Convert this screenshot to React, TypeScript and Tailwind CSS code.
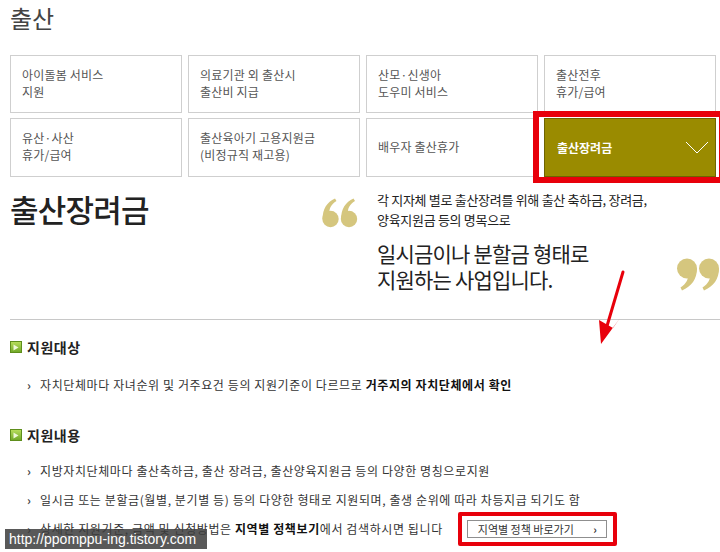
import React from 'react';

const cards: { lines: string[]; active?: boolean }[] = [
  { lines: ['아이돌봄 서비스', '지원'] },
  { lines: ['의료기관 외 출산시', '출산비 지급'] },
  { lines: ['산모·신생아', '도우미 서비스'] },
  { lines: ['출산전후', '휴가/급여'] },
  { lines: ['유산·사산', '휴가/급여'] },
  { lines: ['출산육아기 고용지원금', '(비정규직 재고용)'] },
  { lines: ['배우자 출산휴가'] },
  { lines: ['출산장려금'], active: true },
];

const QuoteOpen = () => (
  <svg width="36" height="30" viewBox="0 0 36 30" className="shrink-0">
    <g fill="#d5c67e">
      <circle cx="8.5" cy="21" r="8.2" />
      <path d="M0.6 21 C0.6 11 5 4 13 0.5 L14.5 3 C9 6.5 7 11 7.5 15 Z" />
      <circle cx="27" cy="21" r="8.2" />
      <path d="M19.1 21 C19.1 11 23.5 4 31.5 0.5 L33 3 C27.5 6.5 25.5 11 26 15 Z" />
    </g>
  </svg>
);

const QuoteClose = () => (
  <svg width="44" height="33" viewBox="0 0 44 33" className="shrink-0">
    <g fill="#d5c67e">
      <circle cx="11" cy="10.5" r="10" />
      <path d="M21 10.5 C21 21 15.5 28.5 6 32.5 L4.5 29.5 C10.5 25.5 12.5 21 12 16 Z" />
      <circle cx="33" cy="10.5" r="10" />
      <path d="M43 10.5 C43 21 37.5 28.5 28 32.5 L26.5 29.5 C32.5 25.5 34.5 21 34 16 Z" />
    </g>
  </svg>
);

const SectionIcon = () => (
  <span className="w-[12px] h-[12px] border border-[#5e8e1c] bg-gradient-to-b from-[#b5dc5a] to-[#72a928] flex items-center justify-center shrink-0">
    <svg width="6" height="7" viewBox="0 0 6 7">
      <path d="M0.5 0.5 L5.5 3.5 L0.5 6.5 Z" fill="#eef8d8" />
    </svg>
  </span>
);

const Bullet = ({ children }: { children: React.ReactNode }) => (
  <div className="flex items-center h-[20px] pl-[27px] text-[12px] text-[#333]">
    <span className="w-[13px] text-[12px] font-bold text-[#444]">›</span>
    <span className="whitespace-nowrap flex items-center tracking-[0.6px]">{children}</span>
  </div>
);

export default function App() {
  return (
    <div className="relative w-[720px] h-[552px] overflow-hidden bg-white font-['Noto_Sans_CJK_KR',sans-serif]">
      {/* Page title */}
      <h1 className="pl-[10px] pt-[3px] text-[24px] leading-[30px] text-[#444] font-normal">출산</h1>

      {/* Category grid */}
      <div className="mt-[22px] ml-[10px] w-[706px] grid grid-cols-4 gap-x-[6px] gap-y-[5px]">
        {cards.map((c, i) =>
          c.active ? (
            <div key={i} className="relative h-[59px]">
              <div className="absolute -left-[11px] -top-[7px] -bottom-[6px] -right-[9px] border-[6px] border-[#e8000b]" />
              <div className="relative h-full bg-[#9a8b00] border border-[#6e6400] flex items-center justify-between pl-[12px] pr-[6px]">
                <span className="text-[12px] font-bold text-white">{c.lines[0]}</span>
                <svg width="24" height="13" viewBox="0 0 24 13">
                  <path d="M1 1 L12 12 L23 1" fill="none" stroke="#fff" strokeWidth="1" />
                </svg>
              </div>
            </div>
          ) : (
            <div key={i} className={`border border-[#cfcfcf] flex items-center px-[11px] ${i < 4 ? 'h-[58px]' : 'h-[59px]'}`}>
              <div className="text-[12px] leading-[17px] text-[#555] pb-[3px] tracking-[0.2px]">
                {c.lines.map((l, j) => (
                  <div key={j}>{l}</div>
                ))}
              </div>
            </div>
          )
        )}
      </div>

      {/* Intro */}
      <div className="mt-[13px] flex items-start">
        <h2 className="w-[322px] shrink-0 pl-[10px] text-[31px] leading-[38px] font-medium tracking-[-0.8px] text-[#222]">출산장려금</h2>
        <div className="mt-[8px]"><QuoteOpen /></div>
        <div className="ml-[19px] text-[#222]">
          <p className="text-[13px] leading-[20px] tracking-[-0.3px]">각 지자체 별로 출산장려를 위해 출산 축하금, 장려금,</p>
          <p className="text-[13px] leading-[20px] tracking-[-0.3px]">양육지원금 등의 명목으로</p>
          <p className="mt-[10px] text-[21px] leading-[26px] tracking-[-0.8px]">일시금이나 분할금 형태로</p>
          <p className="text-[21px] leading-[26px] tracking-[-0.8px]">지원하는 사업입니다.</p>
        </div>
        <div className="ml-auto mt-[68px]"><QuoteClose /></div>
      </div>

      <div className="mt-[27px] ml-[10px] border-t border-[#c8c8c8]" />

      {/* 지원대상 */}
      <div className="mt-[17px] pl-[10px] flex items-center gap-[5px] h-[20px]">
        <SectionIcon />
        <span className="text-[14px] font-bold text-[#222] tracking-[0.5px]">지원대상</span>
      </div>
      <div className="mt-[18px]">
        <Bullet>
          자치단체마다 자녀순위 및 거주요건 등의 지원기준이 다르므로&nbsp;
          <b className="font-bold text-[#111]">거주지의 자치단체에서 확인</b>
        </Bullet>
      </div>

      {/* 지원내용 */}
      <div className="mt-[30px] pl-[10px] flex items-center gap-[5px] h-[20px]">
        <SectionIcon />
        <span className="text-[14px] font-bold text-[#222] tracking-[0.5px]">지원내용</span>
      </div>
      <div className="mt-[16px] flex flex-col gap-[9px]">
        <Bullet>지방자치단체마다 출산축하금, 출산 장려금, 출산양육지원금 등의 다양한 명칭으로지원</Bullet>
        <Bullet>일시금 또는 분할금(월별, 분기별 등) 등의 다양한 형태로 지원되며, 출생 순위에 따라 차등지급 되기도 함</Bullet>
        <Bullet>
          상세한 지원기준, 금액 및 신청방법은&nbsp;<b className="font-bold text-[#111]">지역별 정책보기</b>에서 검색하시면 됩니다
          <span className="relative ml-[24px] inline-flex tracking-normal">
            <span className="absolute -left-[9px] -right-[10px] -top-[8px] -bottom-[8px] border-[4px] border-[#e8000b] rounded-[2px]" />
            <span className="relative w-[140px] h-[18px] border border-[#8f8f8f] bg-white flex items-center justify-between pl-[10px] pr-[9px] text-[11px] text-[#333]">
              <span>지역별 정책 바로가기</span>
              <span className="text-[11px] font-bold">›</span>
            </span>
          </span>
        </Bullet>
      </div>

      {/* Annotation arrow */}
      <svg className="absolute left-[590px] top-[268px]" width="40" height="80" viewBox="0 0 40 80">
        <path d="M33 4 L17 58" stroke="#e8000b" strokeWidth="3" strokeLinecap="round" />
        <path d="M9 52 L23 60 L30 50 L11 76 Z" fill="#e8000b" />
      </svg>

      {/* Watermark */}
      <div className="absolute left-[5px] top-[529px] w-[202px] h-[20px] bg-[#3c3c3c]/85 flex items-center pl-[4px] text-[14px] leading-none text-white font-['Liberation_Sans',sans-serif]">
        http://ppomppu-ing.tistory.com
      </div>
    </div>
  );
}
